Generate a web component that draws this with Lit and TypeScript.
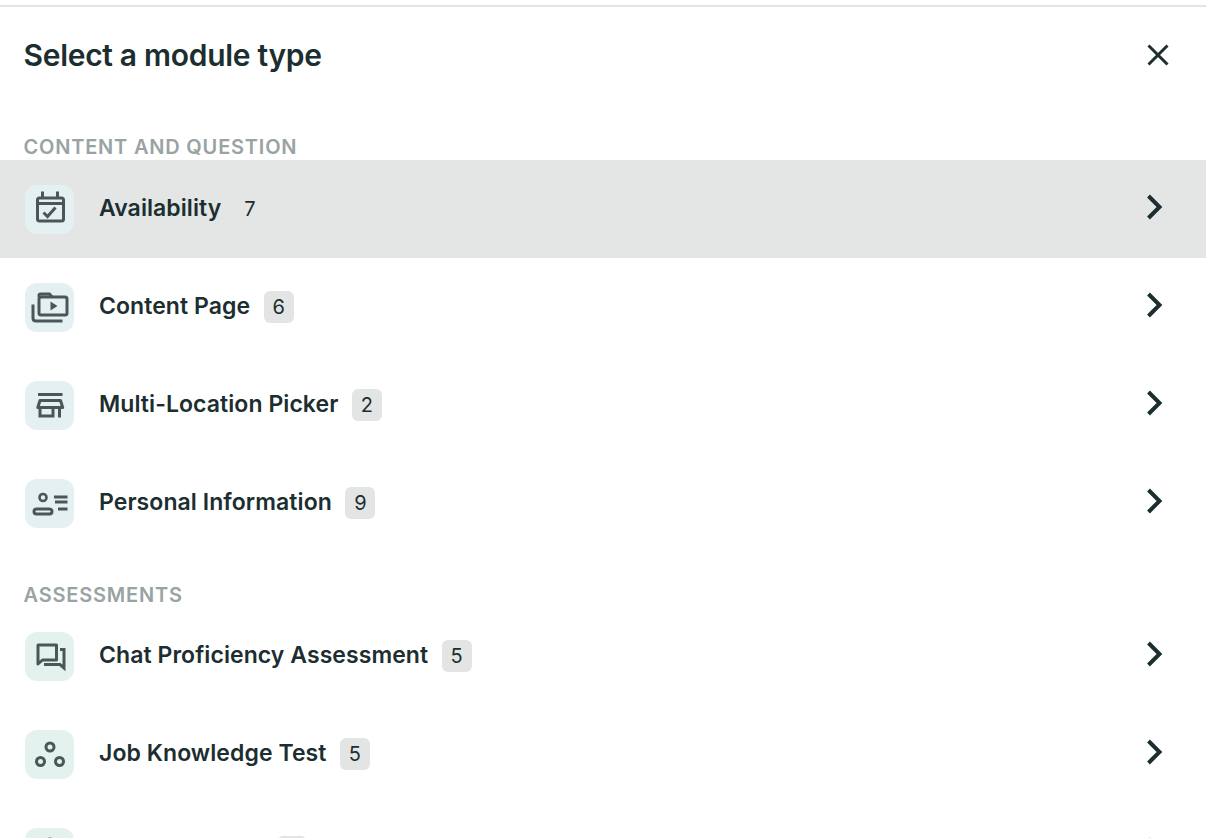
import { LitElement, html, css, svg } from "lit";
import { customElement } from "lit/decorators.js";

const S = (c: unknown) => html`<svg class="glyph" viewBox="0 0 36 36" width="36" height="36" fill="none" stroke="#4a5759" stroke-width="3">${c}</svg>`;
const icons: Record<string, unknown> = {
  cal: S(svg`<rect x="5.500" y="7" width="26" height="23" rx="2"/><path d="M5.500 12.500h26M10.500 .5v6M25.500 .5v6"/><path d="M11.500 21.500l4 4 8-9" />`),
  play: S(svg`<rect x="7" y="8" width="28" height="18" rx="2"/><path d="M7 8V6.500q0-1.500 1.500-1.500h9l2.500 3" /><path d="M1 15.500V29q0 3 3 3H30.500"/><path d="M18.500 12.500l7 4.500-7 4.500z" fill="#4a5759" stroke="none"/>`),
  store: S(svg`<path d="M6 7.500H30.500"/><path d="M8 13.500h20.500l2.200 7H5.800z" stroke-linejoin="round"/><path d="M8 21v8H21v-8M27.500 21v9.500"/>`),
  person: S(svg`<circle cx="11" cy="12.500" r="3.500" stroke-width="2.600"/><rect x="2" y="24" width="18" height="5" rx="2.500"/><path d="M22 12H35.500M23 17H35.500M26 24H35.500"/>`),
  chat: S(svg`<path d="M6 7H24.500V22H10.500L6 26Z" stroke-linejoin="round"/><path d="M12 26.500H28L32 30V11.500H28"/>`),
  nodes: S(svg`<circle cx="18" cy="11" r="4"/><circle cx="8.500" cy="25.500" r="4"/><circle cx="27.500" cy="25.500" r="4"/>`),
  other: S(svg`<circle cx="18" cy="10" r="5"/>`),
};

type Row = { name: string; n: number; icon: string };
const groupA: Row[] = [
  { name: "Availability", n: 7, icon: "cal" },
  { name: "Content Page", n: 6, icon: "play" },
  { name: "Multi-Location Picker", n: 2, icon: "store" },
  { name: "Personal Information", n: 9, icon: "person" },
];
const groupB: Row[] = [
  { name: "Chat Proficiency Assessment", n: 5, icon: "chat" },
  { name: "Job Knowledge Test", n: 5, icon: "nodes" },
  { name: "Language Test", n: 4, icon: "other" },
];

@customElement("app-root")
export class AppRoot extends LitElement {
  static styles = css`
    :host {
      display: block;
      height: 838px;
      overflow: hidden;
      background: #fff;
      font-family: Inter, "Liberation Sans", sans-serif;
      color: #1c2e30;
    }
    .top { height: 5px; }
    .panel { border-top: 2px solid #e3e5e5; }
    .head {
      display: flex;
      align-items: center;
      justify-content: space-between;
      height: 96px;
      padding: 0 35px 30px 23.500px;
    }
    h1 { margin: 0; font-size: 30px; font-weight: 600; letter-spacing: -0.3px; line-height: 40px; }
    .close { display: block; width: 26px; height: 26px; }
    .label {
      height: 27px;
      padding: 0 23.500px;
      font-size: 20px;
      font-weight: 600;
      line-height: 29px;
      letter-spacing: 0.8px;
      color: #99a3a3;
      text-transform: uppercase;
    }
    .label.second { margin-top: 29px; height: 26px; line-height: 28px; }
    .row {
      display: flex;
      align-items: center;
      height: 98px;
      padding: 0 42px 0 25px;
    }
    .row.active { background: #e4e6e6; }
    .ico {
      display: flex;
      align-items: center;
      justify-content: center;
      flex: none;
      width: 49px;
      height: 49px;
      border-radius: 12px;
      background: #e4f0f2;
    }
    .glyph { overflow: visible; }
    .green .ico { background: #e3f2ee; }
    .name { margin: 0 0 2px 25px; font-size: 23px; font-weight: 600; letter-spacing: 0.07px; }
    .badge {
      display: flex;
      align-items: center;
      justify-content: center;
      margin-left: 13.500px;
      width: 30px;
      height: 32px;
      border-radius: 6px;
      background: #e3e5e5;
      font-size: 20px;
      font-weight: 400;
    }
    .row.active .badge { background: transparent; }
    .grow { flex: 1; }
    .chev { display: block; width: 18px; height: 28px; margin-bottom: 4px; }
  `;

  private row(r: Row, active = false) {
    return html`<div class="row ${active ? "active" : ""}">
      <span class="ico">${icons[r.icon]}</span>
      <span class="name">${r.name}</span>
      <span class="badge">${r.n}</span>
      <span class="grow"></span>
      <svg class="chev" viewBox="0 0 18 28" fill="none" stroke="#1c2e30" stroke-width="4"><path d="M2.500 3l11 11-11 11"/></svg>
    </div>`;
  }

  render() {
    return html`<div class="top"></div>
      <div class="panel">
        <div class="head">
          <h1>Select a module type</h1>
          <svg class="close" viewBox="0 0 26 26" fill="none" stroke="#1c2e30" stroke-width="3"><path d="M3.500 3.500l19 19M22.500 3.500l-19 19"/></svg>
        </div>
        <div class="label">Content and question</div>
        ${groupA.map((r, i) => this.row(r, i === 0))}
        <div class="label second">Assessments</div>
        <div class="green">${groupB.map((r) => this.row(r))}</div>
      </div>`;
  }
}
